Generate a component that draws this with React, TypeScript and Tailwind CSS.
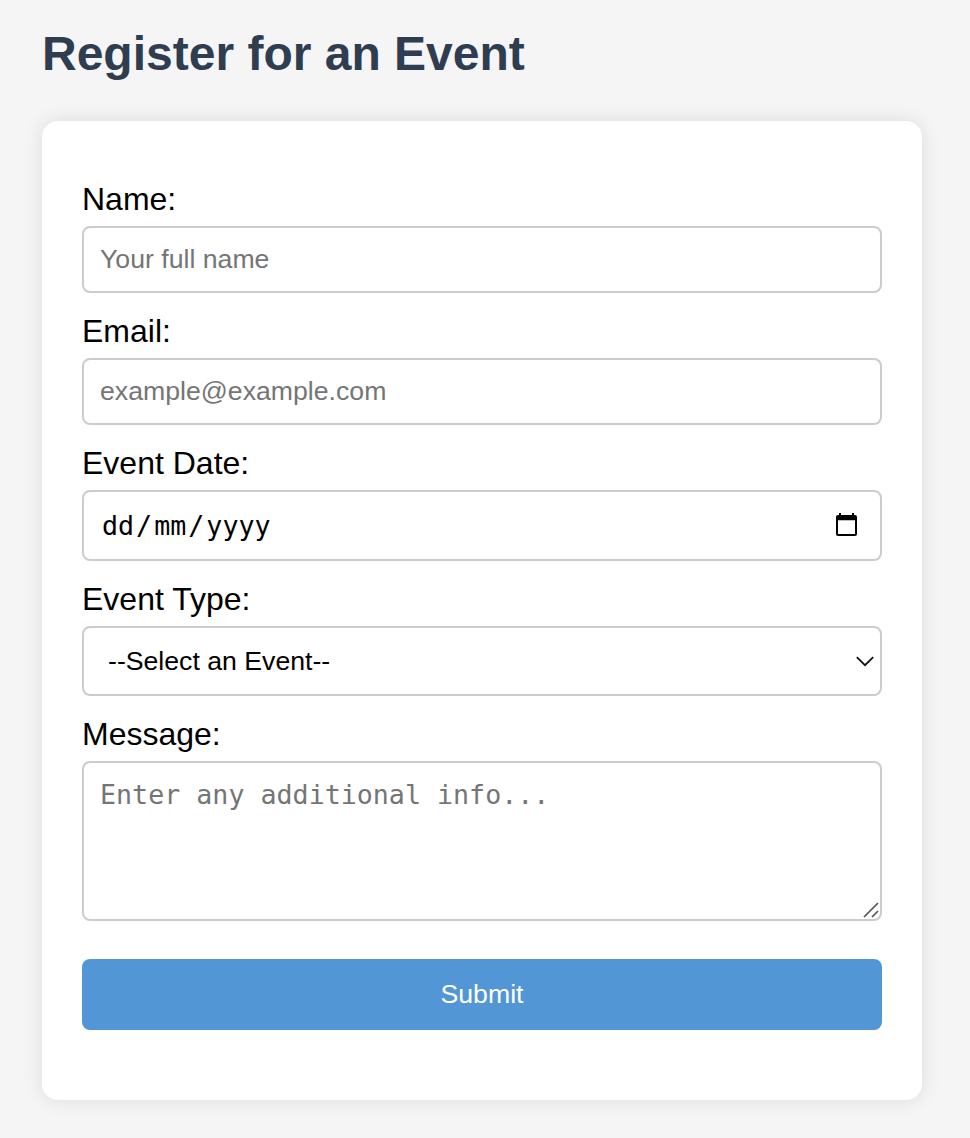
import type { ReactNode } from 'react';

const field = 'flex w-full rounded-lg border-2 border-[#cccccc] bg-white text-[26.67px]';

function Field({ label, id, children }: { label: string; id: string; children: ReactNode }) {
  return (
    <div className="flex flex-col">
      <label htmlFor={id} className="h-[37px] text-[32px] leading-[37px]">{label}</label>
      <div className="mt-2 flex">{children}</div>
    </div>
  );
}

export default function App() {
  return (
    <main className="h-[1138px] overflow-hidden bg-[#f5f5f5] pl-[42px] pr-12 pt-[26px] font-['Liberation_Sans',Arial,sans-serif] text-black antialiased">
      <h1 className="h-[55px] text-[48px] font-bold leading-[55px] text-[#2f3d50]">Register for an Event</h1>
      <form className="mt-10 flex h-[979px] flex-col rounded-2xl bg-white px-10 pt-[60px] shadow-[0_0_20px_rgba(0,0,0,0.1)]" onSubmit={(e) => e.preventDefault()}>
        <Field label="Name:" id="name">
          <input id="name" placeholder="Your full name" className={`${field} h-[67px] px-4 placeholder:text-[#757575]`} />
        </Field>
        <div className="mt-5">
          <Field label="Email:" id="email">
            <input id="email" type="email" placeholder="example@example.com" className={`${field} h-[67px] px-4 placeholder:text-[#757575]`} />
          </Field>
        </div>
        <div className="mt-5">
          <Field label="Event Date:" id="date">
            <button id="date" type="button" className={`${field} h-[71px] items-center justify-between pl-[18px] pr-[23px]`}>
              <span className="flex font-['DejaVu_Sans_Mono',monospace]">
                <span>dd</span>
                <span className="px-[2px]">/</span>
                <span>mm</span>
                <span className="px-[2px]">/</span>
                <span>yyyy</span>
              </span>
              <svg className="mb-[2px]" width="21" height="23" viewBox="0 0 21 23" aria-hidden="true">
                <path fillRule="evenodd" d="M3 0h2v2h11V0h2v2h1a2 2 0 0 1 2 2v17a2 2 0 0 1-2 2H2a2 2 0 0 1-2-2V4a2 2 0 0 1 2-2h1zM2 7.3V21h17V7.3z" />
              </svg>
            </button>
          </Field>
        </div>
        <div className="mt-5">
          <Field label="Event Type:" id="type">
            <button id="type" type="button" className={`${field} h-[70px] items-center justify-between pl-6 pr-[6px]`}>
              <span>--Select an Event--</span>
              <svg width="18" height="11" viewBox="0 0 18 11" fill="none" stroke="#111" strokeWidth="1.8" aria-hidden="true">
                <path d="m.8 1.2 8.2 8 8.2-8" />
              </svg>
            </button>
          </Field>
        </div>
        <div className="mt-5">
          <Field label="Message:" id="message">
            <div className="relative flex w-full">
              <textarea id="message" placeholder="Enter any additional info..." className={`${field} h-[160px] resize-none px-4 pt-4 font-['DejaVu_Sans_Mono',monospace] leading-[31px] placeholder:text-[#757575]`} />
              <svg className="absolute bottom-[3px] right-[3px]" width="16" height="16" viewBox="0 0 16 16" stroke="#555" strokeWidth="1.7" aria-hidden="true">
                <path d="M1 15 15 1M9 15l6-6" />
              </svg>
            </div>
          </Field>
        </div>
        <button type="submit" className="mt-[38px] h-[71px] w-full rounded-lg bg-[#5296d5] pb-[2px] text-[26.67px] text-white">Submit</button>
      </form>
    </main>
  );
}
